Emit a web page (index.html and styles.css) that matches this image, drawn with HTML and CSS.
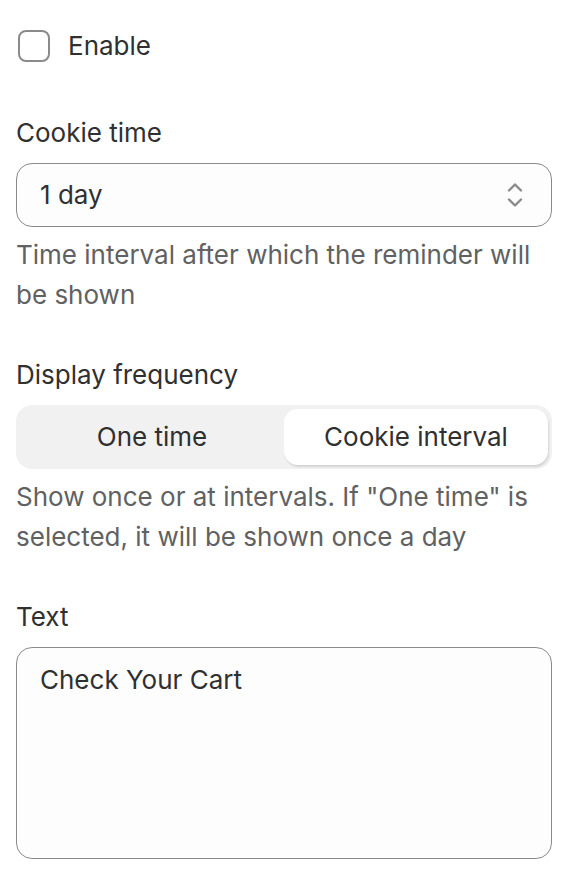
FILE: index.html
```html
<!DOCTYPE html>
<html lang="en">
<head>
<meta charset="utf-8">
<title>Settings</title>
<link rel="stylesheet" href="styles.css">
</head>
<body>
<div class="form">
  <label class="checkbox-row">
    <span class="checkbox"></span>
    <span class="checkbox-label">Enable</span>
  </label>

  <div class="field">
    <div class="label">Cookie time</div>
    <div class="select">
      <span class="select-value">1 day</span>
      <svg class="select-icon" width="20" height="30" viewBox="0 0 20 30" fill="none" stroke="currentColor" stroke-width="2.4" stroke-linecap="round" stroke-linejoin="round">
        <path d="M4 10.5 L10 4.5 L16 10.5"/>
        <path d="M4 19.5 L10 25.5 L16 19.5"/>
      </svg>
    </div>
    <div class="help">Time interval after which the reminder will be shown</div>
  </div>

  <div class="field">
    <div class="label">Display frequency</div>
    <div class="segmented">
      <div class="segment">One time</div>
      <div class="segment is-selected">Cookie interval</div>
    </div>
    <div class="help">Show once or at intervals. If "One time" is selected, it will be shown once a day</div>
  </div>

  <div class="field">
    <div class="label">Text</div>
    <div class="textarea">Check Your Cart</div>
  </div>
</div>
</body>
</html>
```

FILE: styles.css
```css
* { box-sizing: border-box; }
html, body { margin: 0; background: #ffffff; }
body {
  font-family: Inter, "Noto Sans", sans-serif;
  font-size: 26px;
  line-height: 40px;
  color: #303030;
}
.form {
  padding: 26px 18px 0 16px;
  display: flex;
  flex-direction: column;
  gap: 40px;
}
.checkbox-row {
  display: flex;
  align-items: center;
  gap: 18px;
  padding-left: 2px;
  margin-bottom: 7px;
}
.checkbox {
  width: 32px;
  height: 32px;
  border: 2px solid #8a8a8a;
  border-radius: 8px;
  background: #fff;
  flex: none;
}
.field { display: flex; flex-direction: column; }
.label { margin-bottom: 10px; }
.select {
  height: 64px;
  border: 1.5px solid #8a8a8a;
  border-radius: 16px;
  background: #fdfdfd;
  display: flex;
  align-items: center;
  justify-content: space-between;
  padding: 0 26px 0 23px;
}
.select-icon { color: #8a8a8a; }
.help { color: #616161; margin-top: 8px; }
.segmented {
  height: 64px;
  background: #f1f1f1;
  border-radius: 16px;
  padding: 4px;
  display: grid;
  grid-template-columns: 1fr 1fr;
}
.segment {
  display: flex;
  align-items: center;
  justify-content: center;
  border-radius: 14px;
}
.segment.is-selected {
  background: #ffffff;
  box-shadow: 1px 2px 2px rgba(0,0,0,0.12);
}
.textarea {
  height: 212px;
  border: 1.5px solid #8a8a8a;
  border-radius: 16px;
  background: #fdfdfd;
  padding: 12px 23px;
}
```
